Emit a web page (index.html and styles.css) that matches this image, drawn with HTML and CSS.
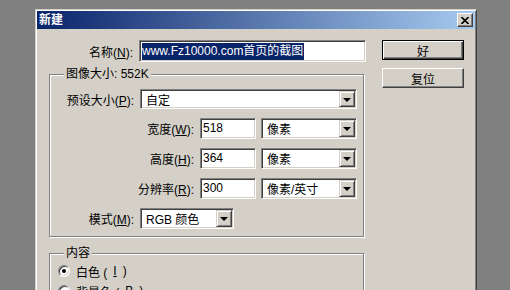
FILE: index.html
```html
<!DOCTYPE html>
<html lang="zh-CN">
<head>
    <meta charset="UTF-8">
    <title>新建</title>
    <link rel="stylesheet" href="styles.css">
</head>
<body>
    <div class="dialog">
        <div class="titlebar">
            <span class="title">新建</span>
            <span class="close">
                <svg width="8" height="7" viewBox="0 0 8 7">
                    <path d="M0.5 0L7.5 7M7.5 0L0.5 7" stroke="#000" stroke-width="1.6"/>
                </svg>
            </span>
        </div>

        <div class="dialog-body">
            <div class="form">
                <div class="row name-row">
                    <span class="lbl lbl-short">名称(<u>N</u>):</span>
                    <div class="field name-field"><span class="sel">www.Fz10000.com首页的截图</span></div>
                </div>

                <fieldset class="group">
                    <legend>图像大小: 552K</legend>
                    <div class="row row-first">
                        <span class="lbl lbl-short">预设大小(<u>P</u>):</span>
                        <div class="field select preset"><span class="val">自定</span><span class="drop"></span></div>
                    </div>
                    <div class="row">
                        <span class="lbl lbl-long">宽度(<u>W</u>):</span>
                        <div class="field num">518</div>
                        <div class="field select unit"><span class="val">像素</span><span class="drop"></span></div>
                    </div>
                    <div class="row">
                        <span class="lbl lbl-long">高度(<u>H</u>):</span>
                        <div class="field num">364</div>
                        <div class="field select unit"><span class="val">像素</span><span class="drop"></span></div>
                    </div>
                    <div class="row">
                        <span class="lbl lbl-long">分辨率(<u>R</u>):</span>
                        <div class="field num">300</div>
                        <div class="field select unit"><span class="val">像素/英寸</span><span class="drop"></span></div>
                    </div>
                    <div class="row">
                        <span class="lbl lbl-short">模式(<u>M</u>):</span>
                        <div class="field select mode"><span class="val">RGB 颜色</span><span class="drop"></span></div>
                    </div>
                </fieldset>

                <fieldset class="group content-group">
                    <legend>内容</legend>
                    <div class="radio-row"><span class="radio checked"></span>白色 (<u>I</u>)</div>
                    <div class="radio-row"><span class="radio"></span>背景色 (<u>B</u>)</div>
                </fieldset>
            </div>

            <div class="buttons">
                <div class="btn btn-default"><span>好</span></div>
                <div class="btn"><span>复位</span></div>
            </div>
        </div>
    </div>
</body>
</html>
```

FILE: styles.css
```css
body {
    margin: 0;
    height: 290px;
    overflow: hidden;
    background: #808080;
    font-family: "Liberation Sans", "Noto Sans CJK SC", sans-serif;
    font-size: 12px;
    color: #000;
}
.dialog {
    box-sizing: border-box;
    width: 442px;
    height: 320px;
    margin: 9px 0 0 35px;
    padding: 1px;
    background: #d4d0c8;
    border: 1px solid;
    border-color: #d4d0c8 #404040 #404040 #d4d0c8;
    box-shadow: inset 1px 1px #fff, inset -1px -1px #808080;
}
.titlebar {
    display: flex;
    align-items: center;
    justify-content: space-between;
    height: 18px;
    padding: 0 2px;
    background: linear-gradient(to right, #0a246a, #a6caf0);
}
.title {
    color: #fff;
    font-weight: bold;
    line-height: 18px;
}
.close {
    box-sizing: border-box;
    display: flex;
    align-items: center;
    justify-content: center;
    width: 16px;
    height: 14px;
    background: #d4d0c8;
    border: 1px solid;
    border-color: #fff #404040 #404040 #fff;
    box-shadow: inset -1px -1px #808080;
}

.dialog-body {
    display: flex;
    gap: 16px;
    padding: 11px 0 0 12px;
}
.form { width: 317px; }

.row {
    display: flex;
    align-items: center;
    height: 21px;
    margin-top: 9px;
}
.row-first { margin-top: 0; height: 20px; }
.name-row { margin-top: 0; height: 22px; }
.lbl {
    flex: none;
    text-align: right;
    margin-right: 6px;
    white-space: nowrap;
}
.lbl-short { width: 83px; }
.name-row .lbl-short { width: 84px; }
.lbl-long { width: 143px; }

.field {
    box-sizing: border-box;
    height: 100%;
    background: #fff;
    border: 1px solid;
    border-color: #808080 #fff #fff #808080;
    box-shadow: inset 1px 1px #404040, inset -1px -1px #d4d0c8;
    padding: 1px;
    white-space: nowrap;
}
.name-field {
    width: 227px;
    display: flex;
    align-items: center;
    padding-left: 2px;
}
.sel {
    background: #0a246a;
    color: #fff;
    line-height: 17px;
    padding-right: 1px;
}
.num {
    width: 56px;
    margin-right: 5px;
    padding-left: 2px;
    line-height: 17px;
}
.select {
    display: flex;
    align-items: center;
}
.select .val {
    flex: 1;
    padding-left: 4px;
}
.preset { width: 217px; }
.unit { width: 96px; }
.mode { width: 94px; }
.drop {
    box-sizing: border-box;
    position: relative;
    flex: none;
    width: 16px;
    height: 100%;
    background: #d4d0c8;
    border: 1px solid;
    border-color: #d4d0c8 #404040 #404040 #d4d0c8;
    box-shadow: inset 1px 1px #fff, inset -1px -1px #808080;
}
.drop::after {
    content: "";
    position: absolute;
    left: 3px;
    top: 6px;
    border-left: 4px solid transparent;
    border-right: 4px solid transparent;
    border-top: 4px solid #000;
}

.group {
    box-sizing: border-box;
    width: 315px;
    min-width: 0;
    margin: 5px 0 0;
    padding: 8px 0 7px 1px;
    border: 1px solid #808080;
    box-shadow: inset 1px 1px #fff, 1px 1px #fff;
}
.group legend {
    margin-left: 13px;
    padding: 0 2px;
    line-height: 14px;
    background: #d4d0c8;
}
.content-group {
    margin-top: 9px;
    padding: 4px 0 0 1px;
    height: 60px;
}
.radio-row {
    display: flex;
    align-items: center;
    gap: 6px;
    height: 14px;
    margin: 0 0 6px 7px;
}
.radio {
    box-sizing: border-box;
    position: relative;
    width: 12px;
    height: 12px;
    border-radius: 50%;
    background: #fff;
    border: 1px solid;
    border-color: #808080 #fff #fff #808080;
    box-shadow: inset 1px 1px #404040, inset -1px -1px #d4d0c8;
}
.radio.checked::after {
    content: "";
    position: absolute;
    left: 3px;
    top: 3px;
    width: 4px;
    height: 4px;
    border-radius: 50%;
    background: #000;
}

.buttons {
    display: flex;
    flex-direction: column;
    gap: 8px;
}
.btn {
    box-sizing: border-box;
    width: 82px;
    height: 20px;
    display: flex;
    align-items: center;
    justify-content: center;
    background: #d4d0c8;
    border: 1px solid;
    border-color: #fff #404040 #404040 #fff;
    box-shadow: inset -1px -1px #808080;
}
.btn-default {
    border: 1px solid #000;
    box-shadow: inset 1px 1px #fff, inset -1px -1px #404040, inset -2px -2px #808080;
}
```
